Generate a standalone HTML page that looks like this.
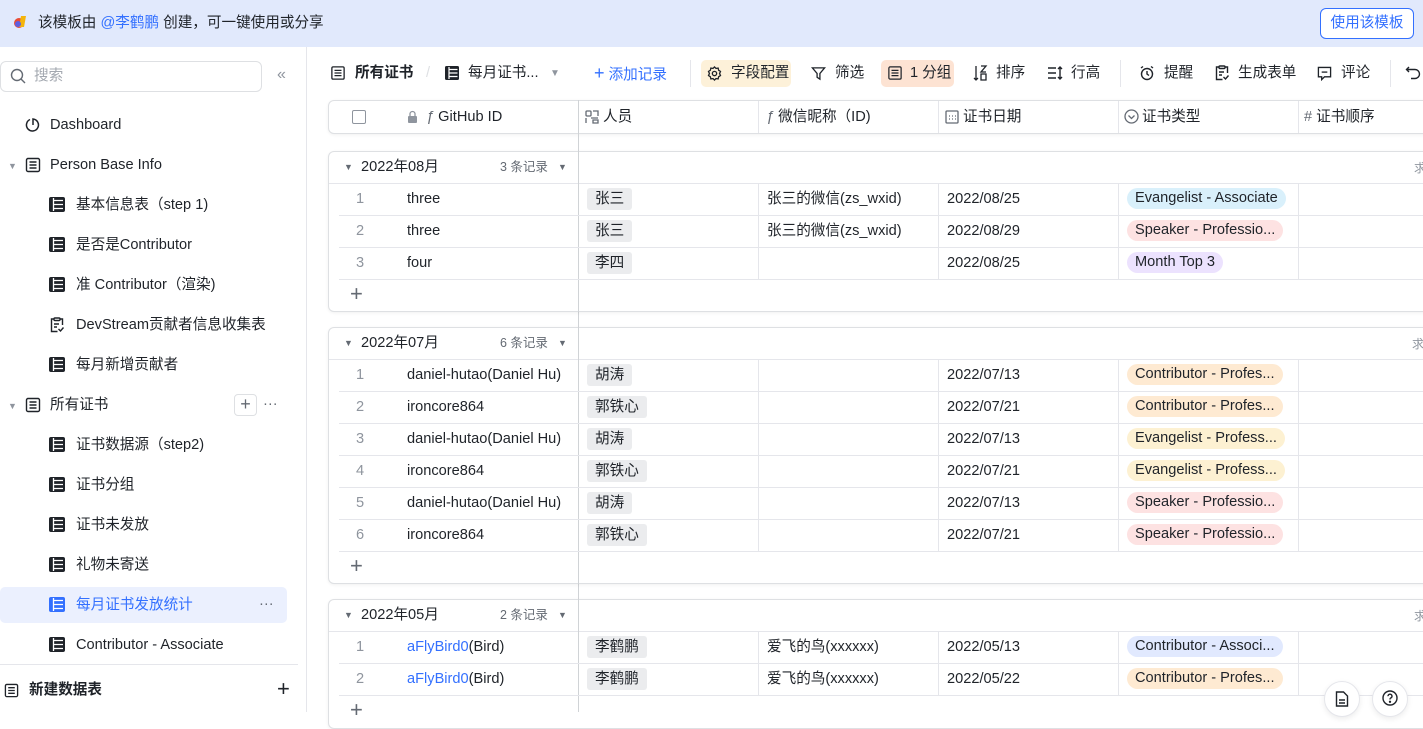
<!DOCTYPE html>
<html><head><meta charset="utf-8"><style>
*{margin:0;padding:0;box-sizing:border-box}
body{width:1423px;height:712px;overflow:hidden;background:#fff;font-family:"Liberation Sans","Noto Sans CJK SC",sans-serif;font-size:14.6px;color:#1f2329;position:relative}
.a{position:absolute;white-space:nowrap;line-height:20px}
.banner{left:0;top:0;width:1423px;height:47px;background:#e1e9fc}
.btn{left:1320px;top:8px;width:94px;height:31px;border:1px solid #3370ff;border-radius:6px;background:#fff;color:#3370ff;text-align:center;line-height:29px!important;font-size:14.6px}
.side{left:0;top:47px;width:307px;height:665px;border-right:1px solid #e5e6eb}
.si{font-size:14.6px}
.tb{font-size:14.6px}
.card{border:1px solid #dee0e3;border-radius:6px;background:#fff;box-shadow:0 1px 3px rgba(0,0,0,.06)}
.hl{height:1px;background:#e5e6eb}
.vl{width:1px;background:#e5e6eb}
.tag{background:#ebecee;border-radius:3px;padding:0 8px;height:22px;line-height:22px!important}
.pill{border-radius:11px;padding:0 8px;height:21px;line-height:21px!important}
.num{color:#8f959e}
.g{color:#646a73}
</style></head><body>
<div class="a banner"></div>
<svg class="a" style="left:13px;top:14px" width="16" height="16" viewBox="0 0 16 16"><circle cx="6" cy="9" r="5" fill="#e94b35"/><path d="M8 2h5l-2 11H6z" fill="#f5b40a"/><circle cx="5" cy="10" r="3" fill="#5f5fe0"/></svg>
<div class="a" style="left:38px;top:13px">该模板由 <span style="color:#3370ff">@李鹤鹏</span> 创建，可一键使用或分享</div>
<div class="a btn">使用该模板</div>

<div class="a side"></div>
<div class="a" style="left:0;top:61px;width:262px;height:31px;border:1px solid #dee0e3;border-radius:6px"></div>
<svg class="a" style="left:10px;top:68px" width="16" height="16" viewBox="0 0 16 16" fill="none" stroke="#646a73" stroke-width="1.4"><circle cx="7" cy="7" r="5.5"/><path d="M11 11l4 4"/></svg>
<div class="a" style="left:34px;top:66px;color:#a3a8b0">搜索</div>
<div class="a" style="left:277px;top:65px;color:#8f959e;font-size:16px">«</div>

<svg class="a" style="left:25px;top:117px" width="16" height="16" viewBox="0 0 16 16" fill="none" stroke="#1f2329" stroke-width="1.5"><path d="M5 2.5A6 6 0 1 0 8 2v6"/></svg>
<div class="a si" style="left:50px;top:115px">Dashboard</div>

<div class="a" style="left:8px;top:156px;color:#8f959e;font-size:9px">▼</div>
<svg class="a" style="left:25px;top:157px" width="16" height="16" viewBox="0 0 16 16" fill="none" stroke="#1f2329" stroke-width="1.4"><rect x="1.5" y="1.5" width="13" height="13" rx="1.5"/><path d="M4.5 5h7M4.5 8h7M4.5 11h7"/></svg>
<div class="a si" style="left:50px;top:155px">Person Base Info</div>

<svg width="0" height="0" style="position:absolute"><defs><g id="tic"><rect x="0" y="0" width="16" height="15" rx="2" fill="#1f2329"/><path d="M5 3.5h9M5 7.5h9M5 11.5h9M4.5 1v13" stroke="#fff" stroke-width="1.3"/></g></defs></svg>
<svg class="a" style="left:49px;top:197px" width="16" height="15"><use href="#tic"/></svg>
<div class="a si" style="left:76px;top:195px">基本信息表（step 1)</div>
<svg class="a" style="left:49px;top:237px" width="16" height="15"><use href="#tic"/></svg>
<div class="a si" style="left:76px;top:235px">是否是Contributor</div>
<svg class="a" style="left:49px;top:277px" width="16" height="15"><use href="#tic"/></svg>
<div class="a si" style="left:76px;top:275px">准 Contributor（渲染)</div>
<svg class="a" style="left:49px;top:317px" width="16" height="16" viewBox="0 0 16 16" fill="none" stroke="#1f2329" stroke-width="1.4"><path d="M5 2H2.5v12.5h6M11 2h2.5v6"/><rect x="5" y="1" width="6" height="2.5" rx="1"/><path d="M5 7h5M5 10h3M9.5 12l2 2 3-3.5"/></svg>
<div class="a si" style="left:76px;top:315px">DevStream贡献者信息收集表</div>
<svg class="a" style="left:49px;top:357px" width="16" height="15"><use href="#tic"/></svg>
<div class="a si" style="left:76px;top:355px">每月新增贡献者</div>

<div class="a" style="left:8px;top:396px;color:#8f959e;font-size:9px">▼</div>
<svg class="a" style="left:25px;top:397px" width="16" height="16" viewBox="0 0 16 16" fill="none" stroke="#1f2329" stroke-width="1.4"><rect x="1.5" y="1.5" width="13" height="13" rx="1.5"/><path d="M4.5 5h7M4.5 8h7M4.5 11h7"/></svg>
<div class="a si" style="left:50px;top:395px">所有证书</div>
<div class="a" style="left:234px;top:394px;width:23px;height:22px;border:1px solid #dee0e3;border-radius:4px;text-align:center;line-height:19px!important;font-size:18px;color:#646a73">+</div>
<div class="a" style="left:263px;top:394px;color:#646a73">···</div>

<svg class="a" style="left:49px;top:437px" width="16" height="15"><use href="#tic"/></svg>
<div class="a si" style="left:76px;top:435px">证书数据源（step2)</div>
<svg class="a" style="left:49px;top:477px" width="16" height="15"><use href="#tic"/></svg>
<div class="a si" style="left:76px;top:475px">证书分组</div>
<svg class="a" style="left:49px;top:517px" width="16" height="15"><use href="#tic"/></svg>
<div class="a si" style="left:76px;top:515px">证书未发放</div>
<svg class="a" style="left:49px;top:557px" width="16" height="15"><use href="#tic"/></svg>
<div class="a si" style="left:76px;top:555px">礼物未寄送</div>
<div class="a" style="left:0;top:587px;width:287px;height:36px;background:#ebf0fe;border-radius:5px"></div>
<svg class="a" style="left:49px;top:597px" width="16" height="15"><rect x="0" y="0" width="16" height="15" rx="2" fill="#3370ff"/><path d="M5 3.5h9M5 7.5h9M5 11.5h9M4.5 1v13" stroke="#fff" stroke-width="1.3"/></svg>
<div class="a si" style="left:76px;top:595px;color:#3370ff">每月证书发放统计</div>
<div class="a" style="left:259px;top:594px;color:#646a73">···</div>
<svg class="a" style="left:49px;top:637px" width="16" height="15"><use href="#tic"/></svg>
<div class="a si" style="left:76px;top:635px">Contributor - Associate</div>
<div class="a hl" style="left:0;top:664px;width:298px"></div>
<svg class="a" style="left:4px;top:683px" width="15" height="15" viewBox="0 0 16 16" fill="none" stroke="#1f2329" stroke-width="1.4"><rect x="1.5" y="1.5" width="13" height="13" rx="1.5"/><path d="M4.5 5h7M4.5 8h7M4.5 11h7"/></svg>
<div class="a si" style="left:29px;top:680px;font-weight:bold">新建数据表</div>
<div class="a" style="left:277px;top:679px;font-size:22px">+</div>

<!-- toolbar -->
<svg class="a" style="left:331px;top:66px" width="14" height="14" viewBox="0 0 16 16" fill="none" stroke="#1f2329" stroke-width="1.5"><rect x="1" y="1" width="14" height="14" rx="1.5"/><path d="M4 5h8M4 8h8M4 11h8"/></svg>
<div class="a tb" style="left:355px;top:63px;font-weight:bold">所有证书</div>
<div class="a" style="left:426px;top:63px;color:#dee0e3">/</div>
<svg class="a" style="left:445px;top:66px" width="14" height="14"><rect x="0" y="0" width="14" height="14" rx="1.5" fill="#1f2329"/><path d="M4.5 3.5h8M4.5 7h8M4.5 10.5h8M4 1v12" stroke="#fff" stroke-width="1.2"/></svg>
<div class="a tb" style="left:468px;top:63px">每月证书...</div>
<div class="a" style="left:550px;top:64px;color:#8f959e;font-size:10px">▼</div>
<div class="a tb" style="left:594px;top:63px;color:#3370ff"><span style="font-size:18px">+</span> 添加记录</div>
<div class="a vl" style="left:690px;top:60px;height:27px"></div>
<div class="a" style="left:701px;top:60px;width:90px;height:27px;background:#fdf1d9;border-radius:5px"></div>
<svg class="a" style="left:707px;top:66px" width="15" height="15" viewBox="0 0 16 16" fill="none" stroke="#1f2329" stroke-width="1.4"><circle cx="8" cy="8" r="2.3"/><path d="M8 1l1.6 1.6 2.3-.3.5 2.2 2 1.3-1 2.2 1 2.2-2 1.3-.5 2.2-2.3-.3L8 15l-1.6-1.6-2.3.3-.5-2.2-2-1.3 1-2.2-1-2.2 2-1.3.5-2.2 2.3.3z"/></svg>
<div class="a tb" style="left:731px;top:63px">字段配置</div>
<svg class="a" style="left:811px;top:66px" width="15" height="15" viewBox="0 0 16 16" fill="none" stroke="#1f2329" stroke-width="1.4"><path d="M1.5 2h13L9.5 8v6l-3-2V8z"/></svg>
<div class="a tb" style="left:835px;top:63px">筛选</div>
<div class="a" style="left:881px;top:60px;width:73px;height:27px;background:#fde3d3;border-radius:5px"></div>
<svg class="a" style="left:888px;top:66px" width="14" height="14" viewBox="0 0 16 16" fill="none" stroke="#1f2329" stroke-width="1.4"><rect x="1" y="1" width="14" height="14" rx="1.5"/><path d="M4 5h8M4 8h8M4 11h8"/></svg>
<div class="a tb" style="left:910px;top:63px">1 分组</div>
<svg class="a" style="left:973px;top:65px" width="15" height="16" viewBox="0 0 15 16" fill="none" stroke="#1f2329" stroke-width="1.3"><path d="M3 1v14M1 13l2 2 2-2M8 1h5L8 7h5M8 9h5v6H8z"/></svg>
<div class="a tb" style="left:996px;top:63px">排序</div>
<svg class="a" style="left:1047px;top:66px" width="16" height="14" viewBox="0 0 16 14" fill="none" stroke="#1f2329" stroke-width="1.4"><path d="M1 2h8M1 7h8M1 12h8M13 1v12M11 3l2-2 2 2M11 11l2 2 2-2"/></svg>
<div class="a tb" style="left:1071px;top:63px">行高</div>
<div class="a vl" style="left:1120px;top:60px;height:27px"></div>
<svg class="a" style="left:1139px;top:65px" width="16" height="16" viewBox="0 0 16 16" fill="none" stroke="#1f2329" stroke-width="1.4"><circle cx="8" cy="9" r="5.5"/><path d="M8 6v3l2 1.5M2 3l2-1.5M14 3l-2-1.5"/></svg>
<div class="a tb" style="left:1164px;top:63px">提醒</div>
<svg class="a" style="left:1214px;top:65px" width="16" height="16" viewBox="0 0 16 16" fill="none" stroke="#1f2329" stroke-width="1.4"><path d="M5 2H2.5v12.5h6M11 2h2.5v6"/><rect x="5" y="1" width="6" height="2.5" rx="1"/><path d="M5 7h5M5 10h3M9.5 12l2 2 3-3.5"/></svg>
<div class="a tb" style="left:1238px;top:63px">生成表单</div>
<svg class="a" style="left:1317px;top:66px" width="15" height="15" viewBox="0 0 16 16" fill="none" stroke="#1f2329" stroke-width="1.4"><path d="M1.5 1.5h13v10H8l-3 3v-3H1.5z"/><path d="M5 6.5h6"/></svg>
<div class="a tb" style="left:1341px;top:63px">评论</div>
<div class="a vl" style="left:1390px;top:60px;height:27px"></div>
<svg class="a" style="left:1405px;top:65px" width="16" height="16" viewBox="0 0 16 16" fill="none" stroke="#1f2329" stroke-width="1.4"><path d="M4 2L1.5 4.5 4 7M1.5 4.5H10a4.5 4.5 0 0 1 0 9H6"/></svg>

<!-- header row -->
<div class="a card" style="left:328px;top:100px;width:1110px;height:34px"></div>
<div class="a" style="left:578px;top:100px;width:1px;height:612px;background:#d0d3d6"></div>
<div class="a vl" style="left:758px;top:101px;height:32px"></div>
<div class="a vl" style="left:938px;top:101px;height:32px"></div>
<div class="a vl" style="left:1118px;top:101px;height:32px"></div>
<div class="a vl" style="left:1298px;top:101px;height:32px"></div>
<div class="a" style="left:352px;top:110px;width:14px;height:14px;border:1px solid #8f959e;border-radius:2px"></div>
<svg class="a" style="left:407px;top:110px" width="11" height="13" viewBox="0 0 11 13"><path d="M3 6V4a2.5 2.5 0 0 1 5 0v2" fill="none" stroke="#8f959e" stroke-width="1.3"/><rect x="1" y="6" width="9" height="7" rx="1" fill="#8f959e"/></svg>
<div class="a" style="left:426px;top:107px"><i class="g">ƒ</i> GitHub ID</div>
<svg class="a" style="left:585px;top:110px" width="14" height="14" viewBox="0 0 14 14" fill="none" stroke="#646a73" stroke-width="1.3"><rect x="1" y="1" width="5" height="5" rx="1"/><path d="M1 8v5M6 8h7M8 1h5v5M8 10h5v3h-5z"/></svg>
<div class="a" style="left:603px;top:107px">人员</div>
<div class="a" style="left:766px;top:107px"><i class="g">ƒ</i> 微信昵称（ID)</div>
<svg class="a" style="left:945px;top:110px" width="14" height="14" viewBox="0 0 14 14" fill="none" stroke="#646a73" stroke-width="1.3"><rect x="1" y="1" width="12" height="12" rx="1"/><path d="M4 6h1M7 6h1M10 6h1M4 9h1M7 9h1M10 9h1"/></svg>
<div class="a" style="left:963px;top:107px">证书日期</div>
<svg class="a" style="left:1124px;top:109px" width="15" height="15" viewBox="0 0 15 15" fill="none" stroke="#646a73" stroke-width="1.3"><circle cx="7.5" cy="7.5" r="6.5"/><path d="M4.5 6.5l3 3 3-3"/></svg>
<div class="a" style="left:1142px;top:107px">证书类型</div>
<div class="a" style="left:1304px;top:107px"><span class="g">#</span> 证书顺序</div>

<!-- group 1 -->
<div class="a card" style="left:328px;top:151px;width:1110px;height:161px"></div>
<div class="a hl" style="left:329px;top:183px;width:1100px"></div>
<div class="a" style="left:578px;top:151px;width:1px;height:161px;background:#d0d3d6"></div>
<div class="a" style="left:344px;top:157px;font-size:9px;color:#646a73">▼</div>
<div class="a" style="left:361px;top:157px">2022年08月</div>
<div class="a g" style="left:500px;top:157px;font-size:12.5px">3 条记录</div>
<div class="a" style="left:558px;top:157px;font-size:9px;color:#646a73">▼</div>
<div class="a" style="left:1414px;top:158px;font-size:12px;color:#8f959e">求</div>
<div class="a hl" style="left:339px;top:215px;width:1090px"></div>
<div class="a hl" style="left:339px;top:247px;width:1090px"></div>
<div class="a hl" style="left:339px;top:279px;width:1090px"></div>
<div class="a vl" style="left:758px;top:183px;height:96px"></div>
<div class="a vl" style="left:938px;top:183px;height:96px"></div>
<div class="a vl" style="left:1118px;top:183px;height:96px"></div>
<div class="a vl" style="left:1298px;top:183px;height:96px"></div>
<div class="a num" style="left:356px;top:189px">1</div><div class="a" style="left:407px;top:189px">three</div><div class="a tag" style="left:587px;top:188px">张三</div><div class="a" style="left:767px;top:189px">张三的微信(zs_wxid)</div><div class="a" style="left:947px;top:189px">2022/08/25</div><div class="a pill" style="left:1127px;top:188px;background:#d9f0fb">Evangelist - Associate</div>
<div class="a num" style="left:356px;top:221px">2</div><div class="a" style="left:407px;top:221px">three</div><div class="a tag" style="left:587px;top:220px">张三</div><div class="a" style="left:767px;top:221px">张三的微信(zs_wxid)</div><div class="a" style="left:947px;top:221px">2022/08/29</div><div class="a pill" style="left:1127px;top:220px;background:#fde2e2">Speaker - Professio...</div>
<div class="a num" style="left:356px;top:253px">3</div><div class="a" style="left:407px;top:253px">four</div><div class="a tag" style="left:587px;top:252px">李四</div><div class="a" style="left:947px;top:253px">2022/08/25</div><div class="a pill" style="left:1127px;top:252px;background:#ece2fe">Month Top 3</div>
<div class="a" style="left:350px;top:284px;font-size:22px;color:#646a73;font-weight:300">+</div>

<!-- group 2 -->
<div class="a card" style="left:328px;top:327px;width:1110px;height:257px"></div>
<div class="a hl" style="left:329px;top:359px;width:1100px"></div>
<div class="a" style="left:578px;top:327px;width:1px;height:257px;background:#d0d3d6"></div>
<div class="a" style="left:344px;top:333px;font-size:9px;color:#646a73">▼</div>
<div class="a" style="left:361px;top:333px">2022年07月</div>
<div class="a g" style="left:500px;top:333px;font-size:12.5px">6 条记录</div>
<div class="a" style="left:558px;top:333px;font-size:9px;color:#646a73">▼</div>
<div class="a" style="left:1412px;top:334px;font-size:12px;color:#8f959e">求</div>
<div class="a hl" style="left:339px;top:391px;width:1090px"></div>
<div class="a hl" style="left:339px;top:423px;width:1090px"></div>
<div class="a hl" style="left:339px;top:455px;width:1090px"></div>
<div class="a hl" style="left:339px;top:487px;width:1090px"></div>
<div class="a hl" style="left:339px;top:519px;width:1090px"></div>
<div class="a hl" style="left:339px;top:551px;width:1090px"></div>
<div class="a vl" style="left:758px;top:359px;height:192px"></div>
<div class="a vl" style="left:938px;top:359px;height:192px"></div>
<div class="a vl" style="left:1118px;top:359px;height:192px"></div>
<div class="a vl" style="left:1298px;top:359px;height:192px"></div>
<div class="a num" style="left:356px;top:365px">1</div><div class="a" style="left:407px;top:365px">daniel-hutao(Daniel Hu)</div><div class="a tag" style="left:587px;top:364px">胡涛</div><div class="a" style="left:947px;top:365px">2022/07/13</div><div class="a pill" style="left:1127px;top:364px;background:#feead2">Contributor - Profes...</div>
<div class="a num" style="left:356px;top:397px">2</div><div class="a" style="left:407px;top:397px">ironcore864</div><div class="a tag" style="left:587px;top:396px">郭铁心</div><div class="a" style="left:947px;top:397px">2022/07/21</div><div class="a pill" style="left:1127px;top:396px;background:#feead2">Contributor - Profes...</div>
<div class="a num" style="left:356px;top:429px">3</div><div class="a" style="left:407px;top:429px">daniel-hutao(Daniel Hu)</div><div class="a tag" style="left:587px;top:428px">胡涛</div><div class="a" style="left:947px;top:429px">2022/07/13</div><div class="a pill" style="left:1127px;top:428px;background:#fdf1d2">Evangelist - Profess...</div>
<div class="a num" style="left:356px;top:461px">4</div><div class="a" style="left:407px;top:461px">ironcore864</div><div class="a tag" style="left:587px;top:460px">郭铁心</div><div class="a" style="left:947px;top:461px">2022/07/21</div><div class="a pill" style="left:1127px;top:460px;background:#fdf1d2">Evangelist - Profess...</div>
<div class="a num" style="left:356px;top:493px">5</div><div class="a" style="left:407px;top:493px">daniel-hutao(Daniel Hu)</div><div class="a tag" style="left:587px;top:492px">胡涛</div><div class="a" style="left:947px;top:493px">2022/07/13</div><div class="a pill" style="left:1127px;top:492px;background:#fde2e2">Speaker - Professio...</div>
<div class="a num" style="left:356px;top:525px">6</div><div class="a" style="left:407px;top:525px">ironcore864</div><div class="a tag" style="left:587px;top:524px">郭铁心</div><div class="a" style="left:947px;top:525px">2022/07/21</div><div class="a pill" style="left:1127px;top:524px;background:#fde2e2">Speaker - Professio...</div>
<div class="a" style="left:350px;top:556px;font-size:22px;color:#646a73;font-weight:300">+</div>

<!-- group 3 -->
<div class="a card" style="left:328px;top:599px;width:1110px;height:130px"></div>
<div class="a hl" style="left:329px;top:631px;width:1100px"></div>
<div class="a" style="left:578px;top:599px;width:1px;height:113px;background:#d0d3d6"></div>
<div class="a" style="left:344px;top:605px;font-size:9px;color:#646a73">▼</div>
<div class="a" style="left:361px;top:605px">2022年05月</div>
<div class="a g" style="left:500px;top:605px;font-size:12.5px">2 条记录</div>
<div class="a" style="left:558px;top:605px;font-size:9px;color:#646a73">▼</div>
<div class="a" style="left:1414px;top:606px;font-size:12px;color:#8f959e">求</div>
<div class="a hl" style="left:339px;top:663px;width:1090px"></div>
<div class="a hl" style="left:339px;top:695px;width:1090px"></div>
<div class="a vl" style="left:758px;top:631px;height:64px"></div>
<div class="a vl" style="left:938px;top:631px;height:64px"></div>
<div class="a vl" style="left:1118px;top:631px;height:64px"></div>
<div class="a vl" style="left:1298px;top:631px;height:64px"></div>
<div class="a num" style="left:356px;top:637px">1</div><div class="a" style="left:407px;top:637px"><span style="color:#3370ff">aFlyBird0</span>(Bird)</div><div class="a tag" style="left:587px;top:636px">李鹤鹏</div><div class="a" style="left:767px;top:637px">爱飞的鸟(xxxxxx)</div><div class="a" style="left:947px;top:637px">2022/05/13</div><div class="a pill" style="left:1127px;top:636px;background:#e1e9fe">Contributor - Associ...</div>
<div class="a num" style="left:356px;top:669px">2</div><div class="a" style="left:407px;top:669px"><span style="color:#3370ff">aFlyBird0</span>(Bird)</div><div class="a tag" style="left:587px;top:668px">李鹤鹏</div><div class="a" style="left:767px;top:669px">爱飞的鸟(xxxxxx)</div><div class="a" style="left:947px;top:669px">2022/05/22</div><div class="a pill" style="left:1127px;top:668px;background:#feead2">Contributor - Profes...</div>
<div class="a" style="left:350px;top:700px;font-size:22px;color:#646a73;font-weight:300">+</div>

<div class="a" style="left:1324px;top:681px;width:36px;height:36px;border-radius:50%;background:#fff;border:1px solid #e5e6eb;box-shadow:0 2px 6px rgba(0,0,0,.08)"></div>
<svg class="a" style="left:1335px;top:691px" width="14" height="16" viewBox="0 0 14 16" fill="none" stroke="#1f2329" stroke-width="1.4"><path d="M1.5 1h7l4 4v10h-11z"/><path d="M4 9h6M4 12h6"/></svg>
<div class="a" style="left:1372px;top:681px;width:36px;height:36px;border-radius:50%;background:#fff;border:1px solid #e5e6eb;box-shadow:0 2px 6px rgba(0,0,0,.08)"></div>
<svg class="a" style="left:1382px;top:690px" width="16" height="16" viewBox="0 0 16 16" fill="none" stroke="#1f2329" stroke-width="1.4"><circle cx="8" cy="8" r="7"/><path d="M6 6.2a2 2 0 1 1 2.5 1.9c-.5.2-.5.6-.5 1.4"/><circle cx="8" cy="11.8" r=".5" fill="#1f2329"/></svg>
</body></html>
